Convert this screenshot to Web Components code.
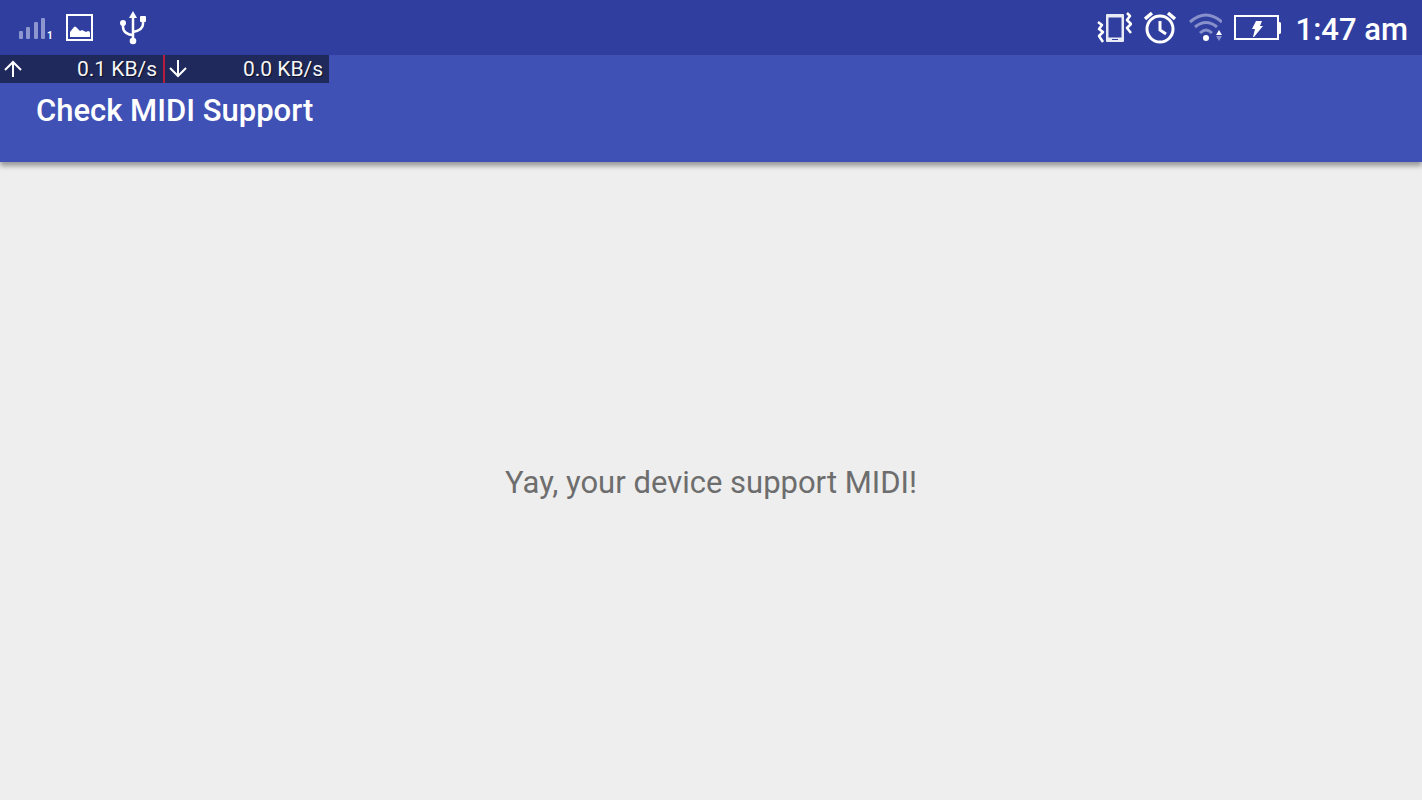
<!DOCTYPE html>
<html lang="en">
<head>
<meta charset="utf-8">
<meta name="viewport" content="width=device-width, initial-scale=1">
<title>Check MIDI Support</title>
<style>
    html, body {
        height: 100%;
        margin: 0;
    }
    body {
        font-family: Roboto, "Liberation Sans", sans-serif;
        background-color: #eeeeee;
    }
</style>
</head>
<body>
<midi-app></midi-app>

<script>
const icons = {
    signal: {
        label: "Mobile signal", width: 36, height: 32,
        svg: `
            <g fill="#8d96ce">
                <rect x="1" y="19" width="4" height="8" rx="1"/>
                <rect x="8" y="15" width="4" height="12" rx="1"/>
                <rect x="16" y="10" width="4" height="17" rx="1"/>
                <rect x="23" y="6" width="4" height="21" rx="1"/>
            </g>
            <text x="29" y="27" font-size="10" font-weight="700" fill="#fff">1</text>`
    },
    picture: {
        label: "Screenshot saved", width: 28, height: 32,
        svg: `
            <rect x="1" y="3" width="25" height="25" fill="none" stroke="#fff" stroke-width="2"/>
            <path fill="#fff" d="M4 25v-5l4-5q1-1 2 0l4 4 2-1 2 1 2 1 2-1q2 0 2 2v4z"/>`
    },
    usb: {
        label: "USB connected", width: 28, height: 36,
        svg: `
            <g fill="none" stroke="#fff" stroke-width="2.5">
                <path d="M14 5v27"/>
                <path d="M4 13v4c0 5 5 8 10 8"/>
                <path d="M24 9v5c0 5-5 7-10 8"/>
            </g>
            <g fill="#fff">
                <path d="M14 1l4 7h-8z"/>
                <circle cx="4" cy="13" r="3"/>
                <rect x="21" y="6" width="6" height="6" rx="1"/>
                <circle cx="14" cy="31" r="3.3"/>
            </g>`
    },
    vibrate: {
        label: "Vibrate", width: 36, height: 34,
        svg: `
            <path fill="#e8eaf6" fill-rule="evenodd" d="M11 3h16a1 1 0 0 1 1 1v26a1 1 0 0 1-1 1H11a1 1 0 0 1-1-1V4a1 1 0 0 1 1-1zM12.500 6.500v20h13v-20z"/>
            <path fill="none" stroke="#303f9f" d="M16 28.500h6"/>
            <g fill="none" stroke="#fff" stroke-width="2.5" stroke-linejoin="round">
                <path d="M2 11l4 3-3 4 4 3-4 4 4 6"/>
                <path d="M31 2l3 3-3 4 4 4-4 4 4 5"/>
            </g>`
    },
    alarm: {
        label: "Alarm set", width: 32, height: 34,
        svg: `
            <g fill="none" stroke="#fff" stroke-width="3">
                <circle cx="16" cy="18" r="13"/>
                <path d="M16 10v9l6 4"/>
                <path stroke-width="3.5" d="M1 8l7-6M24 2l7 6"/>
            </g>`
    },
    wifi: {
        label: "Wi-Fi", width: 34, height: 32,
        svg: `
            <g fill="none" stroke="#8790ca" stroke-width="3">
                <path d="M2 10q16-14 32 0"/>
                <path d="M7 15q11-9 22 0"/>
                <path d="M12 21q6-6 12 0"/>
            </g>
            <circle cx="18" cy="26" r="3" fill="#fff"/>
            <path fill="#fff" d="M31 18l3 5h-6z"/>
            <path fill="#8790ca" d="M28 24h6l-3 5z"/>`
    },
    battery: {
        label: "Battery charging", width: 48, height: 28,
        svg: `
            <rect x="1" y="2" width="43" height="23" fill="none" stroke="#fff" stroke-width="2"/>
            <path fill="#fff" d="M44 8h2l1 1v10l-1 1h-2z"/>
            <path fill="#fff" d="M22 7h6l-2 5h3l-9 11h-1l2-8h-3z"/>`
    },
    up: {
        label: "Upload", width: 18, height: 20,
        svg: `<path fill="none" stroke="#fff" stroke-width="2" d="M9 18V3M1 11l8-8 8 8"/>`
    },
    down: {
        label: "Download", width: 18, height: 20,
        svg: `<path fill="none" stroke="#fff" stroke-width="2" d="M9 1v16M1 9l8 8 8-8"/>`
    }
};

class StatusIcon extends HTMLElement {

    constructor() {
        super();
        this.shadowDOM = this.attachShadow({mode: "open"});
    }
    connectedCallback() {
        this.render();
    }

    render() {
        const icon = icons[this.getAttribute("name")];
        this.shadowDOM.innerHTML = `
        <style>
            :host {
                display: block;
                flex: none;
            }
            svg {
                display: block;
            }
        </style>
        <svg role="img" aria-label="${icon.label}" width="${icon.width}" height="${icon.height}"
            viewBox="0 0 ${icon.width} ${icon.height}">${icon.svg}</svg>
        `;
    }
}

class StatusBar extends HTMLElement {

    constructor() {
        super();
        this.shadowDOM = this.attachShadow({mode: "open"});
        this.shadowDOM.innerHTML = `
        <style>
            :host {
                display: flex;
                align-items: center;
                justify-content: space-between;
                height: 55px;
                padding: 0 14px 0 18px;
                background-color: #303f9f;
                color: white;
            }
            .group {
                display: flex;
                align-items: center;
                gap: 12px;
            }
            .notifications > :last-child {
                margin-left: 13px;
            }
            time {
                margin-left: 2px;
                padding-top: 4px;
                font-size: 31px;
                font-weight: 500;
                line-height: 40px;
            }
        </style>
        <div class="group notifications">
            <status-icon name="signal"></status-icon>
            <status-icon name="picture"></status-icon>
            <status-icon name="usb"></status-icon>
        </div>
        <div class="group">
            <status-icon name="vibrate"></status-icon>
            <status-icon name="alarm"></status-icon>
            <status-icon name="wifi"></status-icon>
            <status-icon name="battery"></status-icon>
            <time datetime="01:47"><slot></slot></time>
        </div>
        `;
    }
}

class SpeedMeter extends HTMLElement {

    constructor() {
        super();
        this.shadowDOM = this.attachShadow({mode: "open"});
    }
    connectedCallback() {
        this.render();
    }

    render() {
        this.shadowDOM.innerHTML = `
        <style>
            :host {
                display: flex;
                background-color: #20295c;
                color: #f5f5f5;
                font-size: 21px;
                line-height: 28px;
                text-shadow: 1px 1px 1px rgba(0, 0, 0, 0.6);
            }
            .rate {
                display: flex;
                align-items: center;
                justify-content: space-between;
                box-sizing: border-box;
                width: 163px;
                padding: 0 6px 0 4px;
            }
            .rate + .rate {
                width: 166px;
                border-left: 2px solid #b71c3c;
            }
        </style>
        <div class="rate"><status-icon name="up"></status-icon><span>${this.getAttribute("up")}</span></div>
        <div class="rate"><status-icon name="down"></status-icon><span>${this.getAttribute("down")}</span></div>
        `;
    }
}

class AppBar extends HTMLElement {

    constructor() {
        super();
        this.shadowDOM = this.attachShadow({mode: "open"});
        this.shadowDOM.innerHTML = `
        <style>
            :host {
                display: flex;
                align-items: center;
                position: relative;
                box-sizing: border-box;
                height: 107px;
                padding: 4px 36px 0;
                background-color: #3f51b5;
                color: white;
                box-shadow: 0 4px 5px rgba(0, 0, 0, 0.36);
            }
            h1 {
                margin: 0;
                font-size: 31px;
                font-weight: 500;
                line-height: 40px;
            }
            /* floats over the bar's top left corner */
            ::slotted(speed-meter) {
                position: absolute;
                top: 0;
                left: 0;
            }
        </style>
        <h1><slot></slot></h1>
        <slot name="overlay"></slot>
        `;
    }
}

class SupportMessage extends HTMLElement {

    constructor() {
        super();
        this.shadowDOM = this.attachShadow({mode: "open"});
        this.shadowDOM.innerHTML = `
        <style>
            :host {
                display: flex;
                flex: 1;
                align-items: center;
                justify-content: center;
                padding-top: 4px;
            }
            p {
                margin: 0;
                color: #6d6d6d;
                font-size: 31px;
                line-height: 40px;
            }
        </style>
        <p><slot></slot></p>
        `;
    }
}

class MidiApp extends HTMLElement {

    constructor() {
        super();
        this.shadowDOM = this.attachShadow({mode: "open"});
        this.shadowDOM.innerHTML = `
        <style>
            :host {
                display: flex;
                flex-direction: column;
                min-height: 100%;
            }
            main {
                display: flex;
                flex: 1;
            }
        </style>
        <status-bar>1:47 am</status-bar>
        <app-bar>Check MIDI Support<speed-meter slot="overlay" up="0.1 KB/s" down="0.0 KB/s"></speed-meter></app-bar>
        <main><support-message>Yay, your device support MIDI!</support-message></main>
        `;
    }
}

customElements.define("status-icon", StatusIcon)
customElements.define("status-bar", StatusBar)
customElements.define("speed-meter", SpeedMeter)
customElements.define("app-bar", AppBar)
customElements.define("support-message", SupportMessage)
customElements.define("midi-app", MidiApp)
</script>
</body>
</html>
